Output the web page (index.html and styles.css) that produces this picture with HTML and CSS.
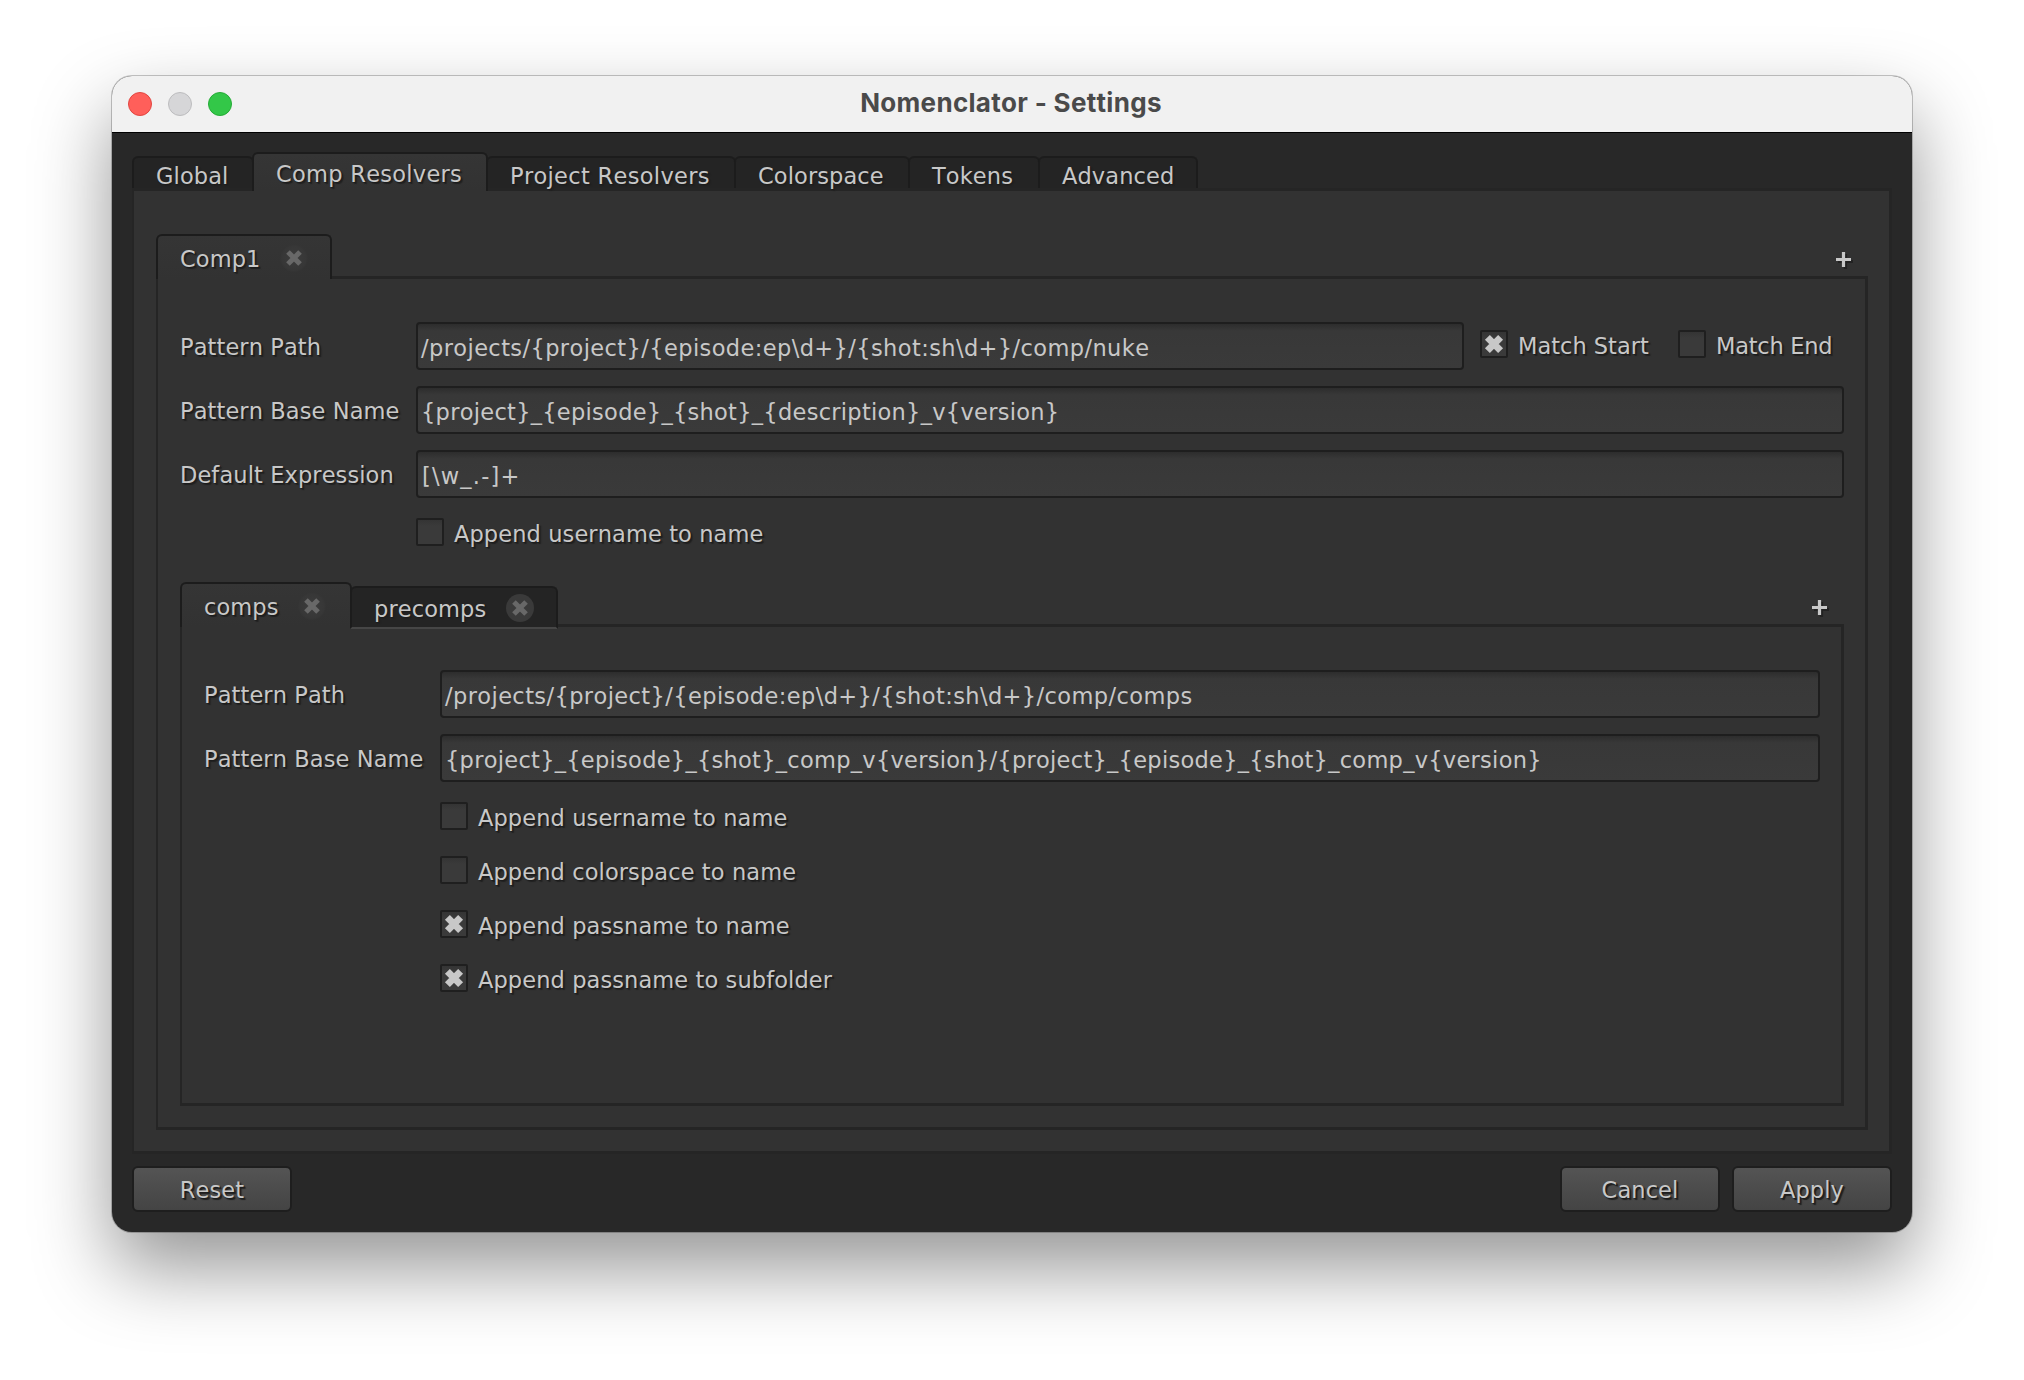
FILE: index.html
```html
<!DOCTYPE html>
<html lang="en">
<head>
    <meta charset="UTF-8">
    <meta name="viewport" content="width=device-width, initial-scale=1.0">
    <title>Nomenclator - Settings</title>
    <link rel="stylesheet" href="styles.css">
</head>
<body>
    <svg class="defs" width="0" height="0">
        <symbol id="cross" viewBox="0 0 20 20">
            <path d="M4.5 4.5L15.5 15.5M15.5 4.5L4.5 15.5" fill="none" stroke="currentColor" stroke-width="5.8"/>
        </symbol>
        <symbol id="close" viewBox="0 0 20 20">
            <path d="M4.5 4.5L15.5 15.5M15.5 4.5L4.5 15.5" fill="none" stroke="currentColor" stroke-width="4.6"/>
        </symbol>
        <symbol id="plus" viewBox="0 0 15 15">
            <path d="M7.5 0V15M0 7.5H15" fill="none" stroke="currentColor" stroke-width="3.2"/>
        </symbol>
    </svg>

    <div class="window">
        <div class="titlebar">
            <div class="lights">
                <span class="light red"></span>
                <span class="light gray"></span>
                <span class="light green"></span>
            </div>
            <h1>Nomenclator - Settings</h1>
        </div>

        <div class="content">
            <div class="tabs main-tabs">
                <div class="tab tab-global">Global</div>
                <div class="tab tab-comp active">Comp Resolvers</div>
                <div class="tab tab-project">Project Resolvers</div>
                <div class="tab tab-colorspace">Colorspace</div>
                <div class="tab tab-tokens">Tokens</div>
                <div class="tab tab-advanced">Advanced</div>
            </div>

            <div class="pane">
                <div class="tabs sub-tabs">
                    <div class="tab tab-comp1 active">
                        <span>Comp1</span>
                        <span class="close"><svg><use href="#close"/></svg></span>
                    </div>
                    <span class="add"><svg><use href="#plus"/></svg></span>
                </div>

                <div class="pane">
                    <div class="form">
                        <div class="row">
                            <div class="label">Pattern Path</div>
                            <div class="field path">/projects/{project}/{episode:ep\d+}/{shot:sh\d+}/comp/nuke</div>
                            <div class="match">
                                <div class="check match-start">
                                    <span class="box"><svg><use href="#cross"/></svg></span>
                                    <span class="check-text">Match Start</span>
                                </div>
                                <div class="check match-end">
                                    <span class="box"></span>
                                    <span class="check-text">Match End</span>
                                </div>
                            </div>
                        </div>
                        <div class="row">
                            <div class="label">Pattern Base Name</div>
                            <div class="field">{project}_{episode}_{shot}_{description}_v{version}</div>
                        </div>
                        <div class="row">
                            <div class="label">Default Expression</div>
                            <div class="field regex">[\w_.-]+</div>
                        </div>
                    </div>
                    <div class="checks">
                        <div class="check">
                            <span class="box"></span>
                            <span class="check-text">Append username to name</span>
                        </div>
                    </div>

                    <div class="tabs sub-tabs output-tabs">
                        <div class="tab tab-comps active">
                            <span>comps</span>
                            <span class="close"><svg><use href="#close"/></svg></span>
                        </div>
                        <div class="tab tab-precomps">
                            <span>precomps</span>
                            <span class="close"><svg><use href="#close"/></svg></span>
                        </div>
                        <span class="add"><svg><use href="#plus"/></svg></span>
                    </div>

                    <div class="pane output-pane">
                        <div class="form">
                            <div class="row">
                                <div class="label">Pattern Path</div>
                                <div class="field path">/projects/{project}/{episode:ep\d+}/{shot:sh\d+}/comp/comps</div>
                            </div>
                            <div class="row">
                                <div class="label">Pattern Base Name</div>
                                <div class="field">{project}_{episode}_{shot}_comp_v{version}/{project}_{episode}_{shot}_comp_v{version}</div>
                            </div>
                        </div>
                        <div class="checks">
                            <div class="check">
                                <span class="box"></span>
                                <span class="check-text">Append username to name</span>
                            </div>
                            <div class="check">
                                <span class="box"></span>
                                <span class="check-text">Append colorspace to name</span>
                            </div>
                            <div class="check">
                                <span class="box"><svg><use href="#cross"/></svg></span>
                                <span class="check-text">Append passname to name</span>
                            </div>
                            <div class="check">
                                <span class="box"><svg><use href="#cross"/></svg></span>
                                <span class="check-text">Append passname to subfolder</span>
                            </div>
                        </div>
                    </div>
                </div>
            </div>

            <div class="footer">
                <button class="btn reset">Reset</button>
                <button class="btn">Cancel</button>
                <button class="btn">Apply</button>
            </div>
        </div>
    </div>
</body>
</html>
```

FILE: styles.css
```css
* {
    margin: 0;
    padding: 0;
    box-sizing: border-box;
}

body {
    background: #fff;
    padding-top: 76px;
    height: 1380px;
    overflow: hidden;
    font-family: Verdana, "DejaVu Sans", sans-serif;
    font-size: 22.5px;
    line-height: 26px;
    letter-spacing: 0.1px;
    font-kerning: none;
    color: #c8c8c8;
}

.defs {
    display: block;
}

.window {
    width: 1800px;
    height: 1156px;
    margin: 0 auto;
    border-radius: 20px;
    overflow: hidden;
    background: #282828;
    box-shadow: 0 0 0 1px rgba(0, 0, 0, 0.22), 0 36px 78px rgba(0, 0, 0, 0.42);
}

/* title bar */
.titlebar {
    display: grid;
    grid-template-columns: 200px 1fr 202px;
    align-items: center;
    height: 57px;
    background: #f1f1f1;
    border-bottom: 1px solid #000;
}

.titlebar h1 {
    padding-bottom: 2px;
    font-family: Inter, sans-serif;
    font-size: 26px;
    font-weight: 700;
    letter-spacing: 0.3px;
    text-align: center;
    color: #4a4a4a;
}

.lights {
    display: flex;
    gap: 16px;
    padding-left: 16px;
}

.light {
    width: 24px;
    height: 24px;
    border-radius: 50%;
}

.red {
    background: #ff5f5a;
    border: 1px solid #e14640;
}

.gray {
    background: #d6d6d8;
    border: 1px solid #bcbcbe;
}

.green {
    background: #33c748;
    border: 1px solid #25ab36;
}

.content {
    padding: 19px 20px 20px;
    text-shadow: 1px 1px 1px #1c1c1c, 2px 2px 1px #222;
}

/* tabs */
.tabs {
    display: flex;
    align-items: flex-end;
}

.tab {
    display: flex;
    position: relative;
    padding-left: 22px;
    background: #242424;
    border: 2px solid #1c1c1c;
    border-bottom: none;
    border-radius: 6px 6px 0 0;
    white-space: nowrap;
}

.tab.active {
    background: linear-gradient(#353535, #323232);
    z-index: 1;
}

.main-tabs {
    height: 36px;
}

.main-tabs .tab {
    height: 32px;
    padding-top: 5px;
    margin-left: -2px;
}

.main-tabs .tab.active {
    height: 39px;
    padding-top: 7px;
    margin-bottom: -3px;
}

.main-tabs .tab-global {
    width: 122px;
    margin-left: 0;
}

.tab-comp {
    width: 236px;
    letter-spacing: 0.28px;
}

.tab-project {
    width: 250px;
    letter-spacing: 0.32px;
}

.tab-colorspace {
    width: 176px;
}

.tab-tokens {
    width: 132px;
}

.tab-advanced {
    width: 160px;
}

.sub-tabs {
    height: 42px;
}

.sub-tabs .tab {
    height: 45px;
    padding: 10px 22px 0;
    margin-bottom: -3px;
    justify-content: space-between;
}

.sub-tabs .tab-precomps {
    height: 43px;
    padding-top: 8px;
    margin-bottom: -5px;
    border-bottom: 2px solid #464646;
}

.tab-comp1 {
    width: 176px;
}

.tab-comps {
    width: 172px;
}

.sub-tabs .tab-comps {
    padding-right: 24px;
}

.tab-precomps {
    width: 208px;
    margin-left: -2px;
}

.close {
    display: flex;
    align-items: center;
    justify-content: center;
    width: 28px;
    height: 28px;
    margin-top: -2px;
    border-radius: 50%;
    background: #3a3a3a;
    color: #686868;
}

.active .close {
    background: radial-gradient(#3c3c3c, #373737 60%, #343434 70%);
}

.close svg {
    width: 22px;
    height: 22px;
}

.add {
    display: flex;
    width: 15px;
    height: 15px;
    margin: 0 17px 9px auto;
}

.add svg {
    width: 15px;
    height: 15px;
    filter: drop-shadow(2px 2px 0 #222);
}

/* panes */
.pane {
    padding: 43px 21px 21px 22px;
    background: #323232;
    border: 3px solid #252525;
    border-left-width: 2px;
}

.output-pane {
    height: 482px;
}

/* forms */
.form {
    display: flex;
    flex-direction: column;
    gap: 16px;
}

.row {
    display: flex;
    height: 48px;
}

.label {
    width: 236px;
    padding-top: 12px;
}

.field {
    flex: 1;
    padding: 11px 3px 0;
    background: linear-gradient(#2d2d2d, #383838 7px, #3a3a3a);
    border: 2px solid #1e1e1e;
    border-radius: 4px;
    letter-spacing: 0.28px;
    text-shadow: none;
    white-space: nowrap;
}

.path {
    letter-spacing: 0.4px;
}

.regex {
    padding-left: 4px;
    letter-spacing: 1.2px;
}

.match {
    display: flex;
    padding-top: 8px;
    margin-left: 16px;
    letter-spacing: 0;
}

.match-start {
    width: 198px;
}

.match-end {
    width: 166px;
    letter-spacing: -0.25px;
}

.checks {
    display: flex;
    flex-direction: column;
    gap: 26px;
    padding: 20px 0 0 236px;
}

.output-tabs {
    margin-top: 36px;
}

.check {
    display: flex;
    gap: 10px;
    height: 28px;
}

.box {
    display: flex;
    align-items: center;
    justify-content: center;
    width: 28px;
    height: 28px;
    padding-bottom: 1px;
    background: linear-gradient(#343434, #3a3a3a 6px);
    border: 2px solid #1f1f1f;
    border-radius: 2px;
}

.box svg {
    width: 24px;
    height: 24px;
}

.check-text {
    padding-top: 3px;
    white-space: nowrap;
}

/* footer buttons */
.footer {
    display: flex;
    gap: 12px;
    padding-top: 12px;
}

.btn {
    width: 160px;
    height: 46px;
    padding-top: 1px;
    background: linear-gradient(#545454, #444);
    border: 2px solid #1e1e1e;
    border-radius: 6px;
    font: inherit;
    letter-spacing: inherit;
    text-shadow: inherit;
    color: inherit;
}

.reset {
    margin-right: auto;
}
```
